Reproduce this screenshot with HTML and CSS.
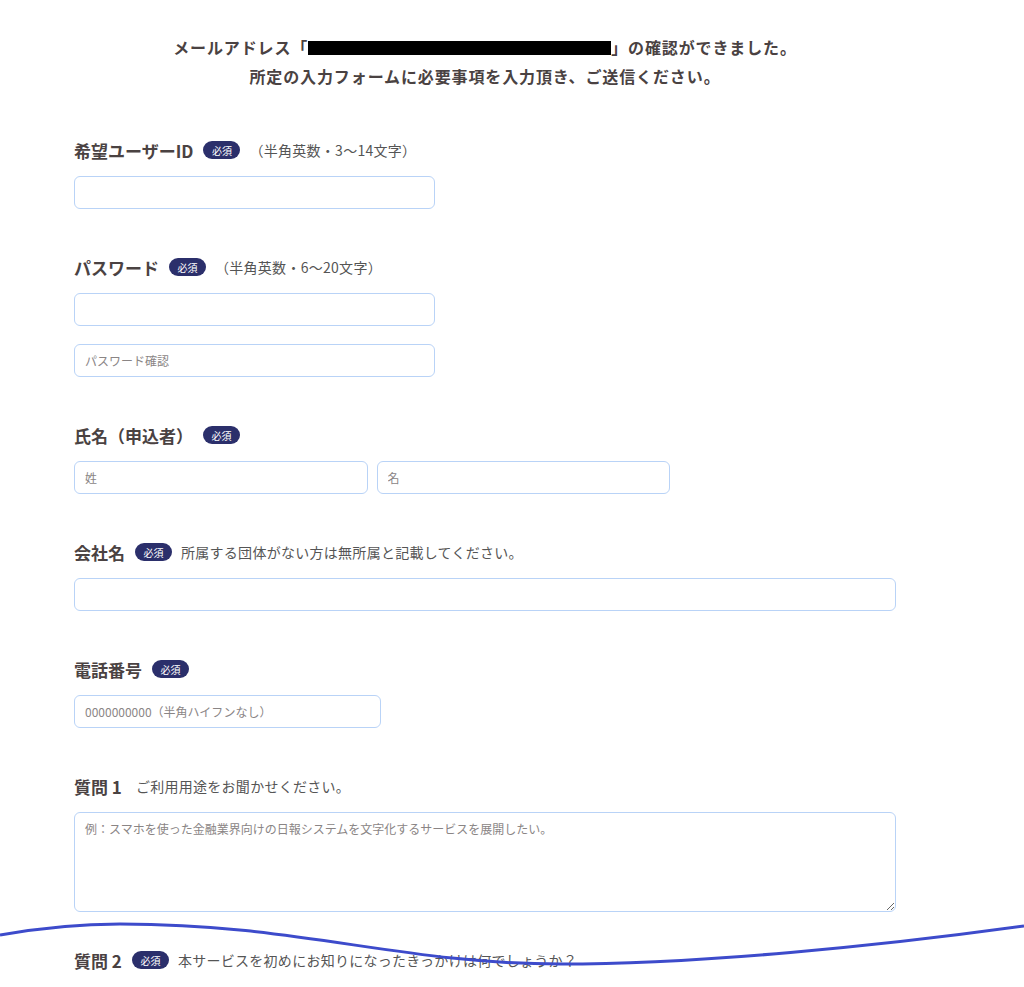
FILE: index.html
```html
<!DOCTYPE html>
<html lang="ja">
<head>
    <meta charset="UTF-8">
    <meta name="viewport" content="width=device-width, initial-scale=1.0">
    <title>会員登録フォーム</title>
    <link rel="stylesheet" href="styles.css">
</head>
<body>
    <div class="container">
        <div class="intro">
            <p>メールアドレス「<span class="masked"></span>」の確認ができました。</p>
            <p>所定の入力フォームに必要事項を入力頂き、ご送信ください。</p>
        </div>

        <div class="field">
            <div class="label-row">
                <label for="user-id">希望ユーザーID</label>
                <span class="badge">必須</span>
                <span class="hint">（半角英数・3〜14文字）</span>
            </div>
            <input type="text" id="user-id" class="input input-short">
        </div>

        <div class="field">
            <div class="label-row">
                <label for="password">パスワード</label>
                <span class="badge">必須</span>
                <span class="hint">（半角英数・6〜20文字）</span>
            </div>
            <input type="password" id="password" class="input input-short">
            <input type="password" id="password-confirm" class="input input-short input-next" placeholder="パスワード確認">
        </div>

        <div class="field">
            <div class="label-row">
                <label for="last-name">氏名（申込者）</label>
                <span class="badge">必須</span>
            </div>
            <div class="name-row">
                <input type="text" id="last-name" class="input" placeholder="姓">
                <input type="text" id="first-name" class="input" placeholder="名">
            </div>
        </div>

        <div class="field">
            <div class="label-row">
                <label for="company">会社名</label>
                <span class="badge">必須</span>
                <span class="hint">所属する団体がない方は無所属と記載してください。</span>
            </div>
            <input type="text" id="company" class="input">
        </div>

        <div class="field">
            <div class="label-row">
                <label for="phone">電話番号</label>
                <span class="badge">必須</span>
            </div>
            <input type="tel" id="phone" class="input input-phone" placeholder="0000000000（半角ハイフンなし）">
        </div>

        <div class="field field-textarea">
            <div class="label-row">
                <label for="question1">質問 1</label>
                <span class="hint">ご利用用途をお聞かせください。</span>
            </div>
            <textarea id="question1" class="input textarea" placeholder="例：スマホを使った金融業界向けの日報システムを文字化するサービスを展開したい。"></textarea>
        </div>

        <div class="field">
            <div class="label-row">
                <label for="question2">質問 2</label>
                <span class="badge">必須</span>
                <span class="hint">本サービスを初めにお知りになったきっかけは何でしょうか？</span>
            </div>
        </div>
    </div>

    <svg class="tear" viewBox="0 0 1024 87" width="1024" height="87">
        <path d="M0,35 C40,28 80,24 120,24 C300,24 400,64 560,64 C700,64 880,46 1024,26" fill="none" stroke="#3d4bcb" stroke-width="3"/>
    </svg>
</body>
</html>
```

FILE: styles.css
```css
body {
    margin: 0;
    padding: 33px 0 0;
    font-family: "Noto Sans CJK JP", "Noto Sans", sans-serif;
    color: #4a4242;
    background: #fff;
    overflow: hidden;
    position: relative;
    height: 954px;
}

.container {
    width: 822px;
    margin-left: 74px;
}

.intro {
    text-align: center;
    font-size: 16px;
    font-weight: bold;
    letter-spacing: 0.055em;
    line-height: 29px;
    margin-bottom: 47px;
}

.intro p {
    margin: 0;
}

.masked {
    display: inline-block;
    width: 303px;
    height: 14px;
    background: #000;
    vertical-align: -1px;
}

.field {
    margin-bottom: 46px;
}

.field-textarea {
    margin-bottom: 36px;
}

.label-row {
    display: flex;
    align-items: center;
    height: 24px;
    margin-bottom: 14px;
}

.label-row label {
    font-size: 17px;
    font-weight: bold;
}

.badge {
    display: inline-flex;
    align-items: center;
    justify-content: center;
    width: 37px;
    height: 18px;
    margin-left: 10px;
    border-radius: 9px;
    background: #2b2f6b;
    color: #fff;
    font-size: 10px;
}

.hint {
    margin-left: 9px;
    font-size: 14px;
    letter-spacing: 0.02em;
    color: #555;
}

.label-row label + .hint {
    margin-left: 14px;
}

.input {
    display: block;
    box-sizing: border-box;
    width: 100%;
    height: 33px;
    padding: 0 10px;
    margin: 0;
    border: 1px solid #b9d3f7;
    border-radius: 6px;
    font-family: "Noto Sans CJK JP", "Noto Sans", sans-serif;
    font-size: 12px;
    color: #333;
    background: #fff;
    outline: none;
}

.input::placeholder {
    color: #8a8585;
}

.input-short {
    width: 361px;
}

.input-next {
    margin-top: 18px;
}

.input-phone {
    width: 307px;
}

.name-row {
    display: flex;
    gap: 9px;
    width: 596px;
}

.name-row .input {
    flex: 1;
}

.textarea {
    height: 100px;
    padding: 7px 10px;
    resize: vertical;
}

.tear {
    position: absolute;
    left: 0;
    top: 900px;
}
```
